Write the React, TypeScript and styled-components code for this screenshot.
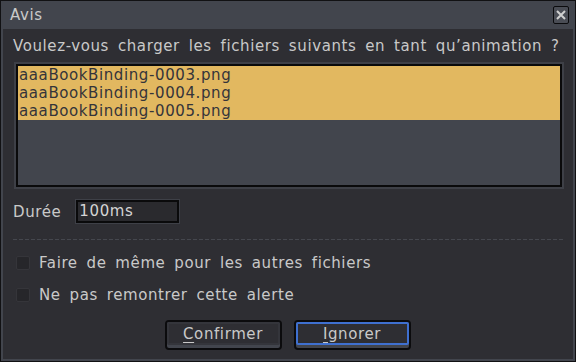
import React from "react";
import styled, { createGlobalStyle } from "styled-components";

const Global = createGlobalStyle`
  html, body { margin: 0; padding: 0; background: #000; }
  body { font-family: "DejaVu Sans", sans-serif; }
  * { box-sizing: border-box; }
`;

const FONT = `"DejaVu Sans", "Noto Sans", sans-serif`;

const Window = styled.div`
  width: 576px;
  height: 362px;
  background: #2e2e33;
  border: 1px solid #111113;
  box-shadow: inset 0 0 0 2px #42454d;
  display: flex;
  flex-direction: column;
  font-family: ${FONT};
  font-size: 15px;
  letter-spacing: 0.6px;
  word-spacing: 3.5px;
  color: #c9c9c9;
  overflow: hidden;
`;

const TitleBar = styled.div`
  height: 28px;
  flex: none;
  background: #42454d;
  display: flex;
  align-items: center;
  justify-content: space-between;
  padding: 0 6px 0 9px;
`;

const Title = styled.span`
  color: #c9c9c9;
  font-size: 15px;
`;

const CloseButton = styled.div`
  width: 16px;
  height: 18px;
  background: #4a4d55;
  border: 1px solid #0b0b0d;
  border-radius: 2px;
  display: flex;
  align-items: center;
  justify-content: center;
`;

const Body = styled.div`
  flex: 1;
  display: flex;
  flex-direction: column;
  padding: 7px 11px 0 12px;
`;

const Question = styled.div`
  height: 20px;
  line-height: 20px;
  white-space: nowrap;
`;

const ListFrame = styled.div`
  margin-top: 6px;
  margin-left: 1px;
  height: 127px;
  border: 2px solid #3e4047;
`;

const List = styled.div`
  height: 100%;
  background: #42454d;
  border: 2px solid #0a0a0b;
  display: flex;
  flex-direction: column;
`;

const Row = styled.div<{ $selected?: boolean }>`
  height: 18px;
  line-height: 18px;
  padding-left: 1px;
  background: ${(p) => (p.$selected ? "#e2b860" : "transparent")};
  color: ${(p) => (p.$selected ? "#34343a" : "#c9c9c9")};
  white-space: nowrap;
`;

const FieldRow = styled.div`
  margin-top: 10px;
  height: 25px;
  display: flex;
  align-items: center;
  gap: 14px;
`;

const Input = styled.div`
  width: 105px;
  height: 25px;
  border: 1px solid #3e4047;
  display: flex;
`;

const InputInner = styled.div`
  flex: 1;
  border: 2px solid #0a0a0b;
  background: #2a2a2e;
  line-height: 19px;
  padding-left: 1px;
  color: #d4d4d4;
`;

const Separator = styled.div`
  margin-top: 15px;
  height: 1px;
  background: repeating-linear-gradient(
    to right,
    #45474e 0 4px,
    transparent 4px 6px
  );
`;

const CheckRow = styled.label<{ $first?: boolean }>`
  display: flex;
  align-items: center;
  gap: 9px;
  height: 20px;
  padding-left: 3px;
  margin-top: ${(p) => (p.$first ? "13px" : "12px")};
`;

const Box = styled.span`
  width: 14px;
  height: 14px;
  background: #26262a;
  border: 1px solid #35353a;
  border-radius: 2px;
  flex: none;
`;

const Buttons = styled.div`
  margin-top: 15px;
  display: flex;
  justify-content: center;
  gap: 12px;
  padding-right: 2px;
`;

const Button = styled.div`
  width: 117px;
  height: 30px;
  border: 2px solid #0b0b0d;
  border-radius: 4px;
  background: #42454d;
  padding-bottom: 3px;
  display: flex;
`;

const ButtonFace = styled.div<{ $focused?: boolean }>`
  flex: 1;
  border-radius: 2px;
  background: #2e2e33;
  border: 2px solid ${(p) => (p.$focused ? "#3f70d0" : "#34353b")};
  display: flex;
  align-items: center;
  justify-content: center;
  color: #c9c9c9;
  font-size: 15px;
`;

const Mnemonic = styled.span`
  text-decoration: underline;
  text-underline-offset: 3px;
`;

export default function App() {
  return (
    <>
      <Global />
      <Window>
        <TitleBar>
          <Title>Avis</Title>
          <CloseButton>
            <svg width="10" height="10" viewBox="0 0 10 10">
              <path d="M1 1L9 9M9 1L1 9" stroke="#d0d0d0" strokeWidth="2" />
            </svg>
          </CloseButton>
        </TitleBar>
        <Body>
          <Question>Voulez-vous charger les fichiers suivants en tant qu’animation ?</Question>
          <ListFrame>
            <List>
              <Row $selected>aaaBookBinding-0003.png</Row>
              <Row $selected>aaaBookBinding-0004.png</Row>
              <Row $selected>aaaBookBinding-0005.png</Row>
            </List>
          </ListFrame>
          <FieldRow>
            <span>Durée</span>
            <Input>
              <InputInner>100ms</InputInner>
            </Input>
          </FieldRow>
          <Separator />
          <CheckRow $first>
            <Box />
            <span>Faire de même pour les autres fichiers</span>
          </CheckRow>
          <CheckRow>
            <Box />
            <span>Ne pas remontrer cette alerte</span>
          </CheckRow>
          <Buttons>
            <Button>
              <ButtonFace>
                <span><Mnemonic>C</Mnemonic>onfirmer</span>
              </ButtonFace>
            </Button>
            <Button>
              <ButtonFace $focused>
                <span><Mnemonic>I</Mnemonic>gnorer</span>
              </ButtonFace>
            </Button>
          </Buttons>
        </Body>
      </Window>
    </>
  );
}
